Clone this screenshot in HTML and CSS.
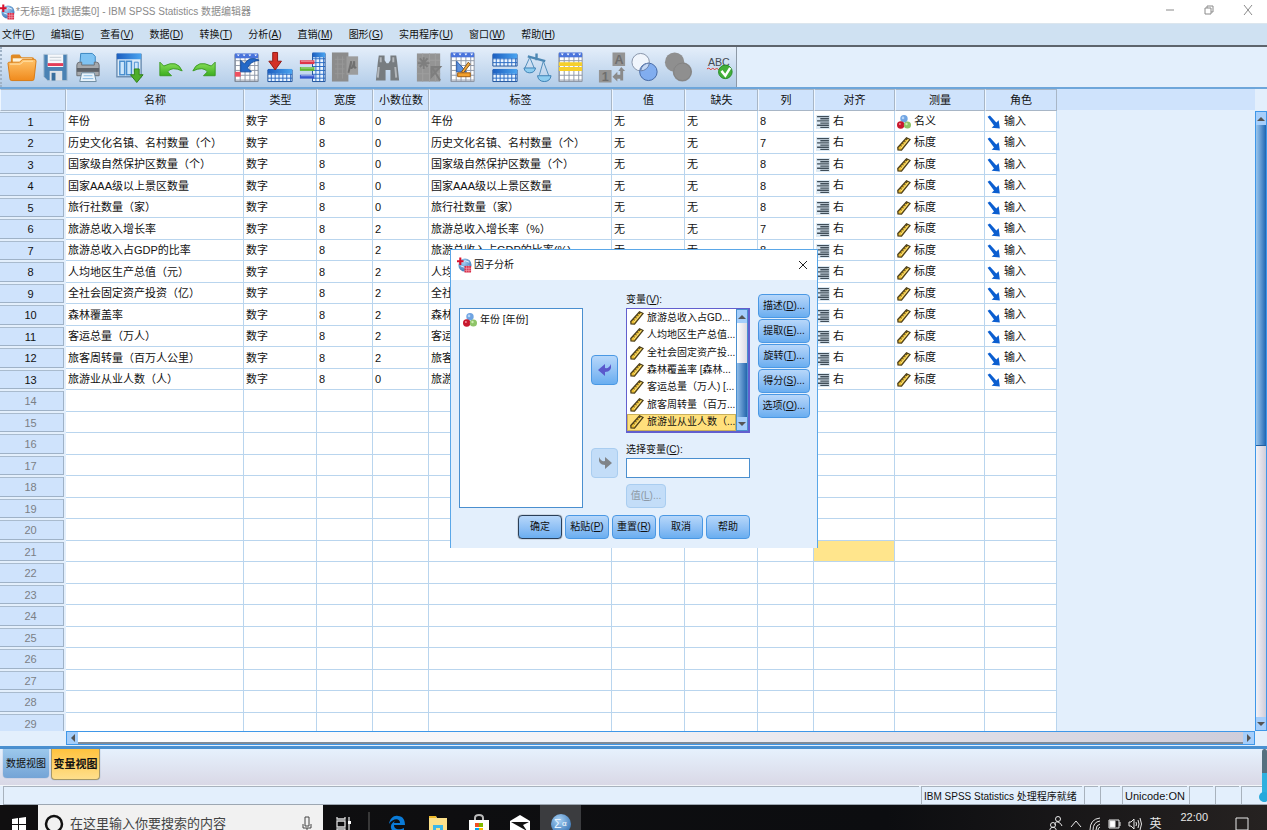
FILE: index.html
```
<!DOCTYPE html>
<html lang="zh-CN">
<head>
<meta charset="utf-8">
<title>*无标题1 [数据集0] - IBM SPSS Statistics 数据编辑器</title>
<link rel="stylesheet" href="styles.css">
</head>
<body>

<svg class="defs" width="0" height="0">
<defs>
	<linearGradient id="blueFade" x1="0" y1="0" x2="1" y2="0"><stop offset="0" stop-color="#1d5fc0"/><stop offset="1" stop-color="#4aa4f0"/></linearGradient>
	<linearGradient id="orangeFade" x1="0" y1="0" x2="0" y2="1"><stop offset="0" stop-color="#ffc36a"/><stop offset="1" stop-color="#f08a1c"/></linearGradient>
	<linearGradient id="greenFade" x1="0" y1="0" x2="0" y2="1"><stop offset="0" stop-color="#8be05a"/><stop offset="1" stop-color="#3cae20"/></linearGradient>
	<radialGradient id="globe" cx=".4" cy=".3" r=".8"><stop offset="0" stop-color="#a9d2f5"/><stop offset="1" stop-color="#2e6db0"/></radialGradient>
	<pattern id="cells" width="5" height="5" patternUnits="userSpaceOnUse"><rect width="5" height="5" fill="#8f98a8"/><rect width="4" height="4" fill="#fff"/></pattern>
	<pattern id="blueCells" width="4" height="4" patternUnits="userSpaceOnUse"><rect width="4" height="4" fill="#2b6cc4"/><rect width="3" height="3" fill="#e9f4ff"/></pattern>
</defs>
<symbol id="app" viewBox="0 0 16 16"><circle cx="8.500" cy="8" r="7" fill="url(#globe)"/><path d="M5 5q4-3 8 0M4 9q4 3 9 0" stroke="#e5f2ff" fill="none"/><path d="M0 4h7M3.500 0v8" stroke="#d9112c" stroke-width="2.200"/><path d="M8 9h7v7H8z" fill="#d92c48"/><path d="M8 11.500h7M8 13.700h7M10.300 9v7M12.700 9v7" stroke="#f6b6c0" stroke-width=".6"/></symbol>
<symbol id="ruler" viewBox="0 0 14 14"><path d="M.8 10.500 9.500.8 13 2.500 4.500 13.200 1 13z" fill="#e9bd32" stroke="#4c3f1c" stroke-width="1.300"/><path d="m3.200 8 1.500 1.200M5.200 6l1.500 1.200M7.200 4l1.500 1.200M9 2l1.200 1" stroke="#4c3f1c"/><path d="m4 11 7.500-8.500" stroke="#fbe68d"/></symbol>
<symbol id="balls" viewBox="0 0 14 14"><circle cx="7" cy="3.800" r="3.700" fill="#6fa4e2"/><circle cx="3.700" cy="10" r="3.700" fill="#c8182e"/><circle cx="10.400" cy="10" r="3.600" fill="#8ec468"/><circle cx="6" cy="2.900" r="1.300" fill="#b5d4f8"/><circle cx="2.900" cy="9" r="1" fill="#f08a96"/><circle cx="9.500" cy="9" r="1.200" fill="#cdeeb0"/></symbol>
<symbol id="right" viewBox="0 0 13 13"><path d="M0 0h13v13H0z" fill="#dce9f3"/><path d="M1 1.500h11M4 3.500h8M1 5.500h11M4 7.500h8M1 9.500h11M4 11.500h8" stroke="#3f4d58" stroke-width="1.200"/></symbol>
<symbol id="input" viewBox="0 0 12 12"><path d="M.5 1.500 2.500.5l5.500 6L10 4.500l1 7-7-.5 2-2z" fill="#0b5ed0"/></symbol>
</svg>

<div class="window">
	<header class="titlebar">
		<svg class="app-icon"><use href="#app"/></svg>
		<span class="title">*无标题1 [数据集0] - IBM SPSS Statistics 数据编辑器</span>
		<div class="window-buttons">
			<button aria-label="最小化"><svg viewBox="0 0 10 10"><path d="M1 5h8"/></svg></button>
			<button aria-label="还原"><svg viewBox="0 0 10 10"><path d="M1 3h6v6H1zM3 3V1h6v6H7"/></svg></button>
			<button aria-label="关闭"><svg viewBox="0 0 10 10"><path d="m1 0 8 10M9 0 1 10"/></svg></button>
		</div>
	</header>

	<nav class="menubar">
		<a href="#">文件(<u>F</u>)</a>
		<a href="#">编辑(<u>E</u>)</a>
		<a href="#">查看(<u>V</u>)</a>
		<a href="#">数据(<u>D</u>)</a>
		<a href="#">转换(<u>T</u>)</a>
		<a href="#">分析(<u>A</u>)</a>
		<a href="#">直销(<u>M</u>)</a>
		<a href="#">图形(<u>G</u>)</a>
		<a href="#">实用程序(<u>U</u>)</a>
		<a href="#">窗口(<u>W</u>)</a>
		<a href="#">帮助(<u>H</u>)</a>
	</nav>

	<div class="toolbar-row">
	<div class="toolbar">
		<div class="group">
			<button aria-label="打开"><svg viewBox="0 0 32 32"><path d="M5 12V5q0-2 2-2h7l2 3h11q2 0 2 2v5z" fill="#e08a24"/><path d="M7 7h20v8H7z" fill="#fff3d8"/><path d="M2 12q0-1 2-1h10l3-3h12q2 0 2 2l-2 18q0 2-2 2H6q-2 0-2-2z" fill="url(#orangeFade)" stroke="#d87c16"/><path d="M4 13h11l3-3h10" stroke="#ffe3b0" fill="none"/></svg></button>
			<button aria-label="保存"><svg viewBox="0 0 32 32"><path d="M6 3h23v27H9l-4-4V3z" fill="#4a82b4" stroke="#a8bfd4"/><path d="M9 3h16v13H9z" fill="#f6f8fb"/><path d="M9 12h16v3H9z" fill="#e23c58"/><path d="M11 6h12M11 9h12" stroke="#c2cad4"/><path d="M11 20h13v10H11z" fill="#dfe3e9"/><path d="M13 22h4v8h-4z" fill="#3a6f9e"/></svg></button>
			<button aria-label="打印"><svg viewBox="0 0 32 32"><path d="M9 2h12l3 3v10H8z" fill="#7fc3f3" stroke="#3a85c0"/><path d="M5 14q0-3 3-3h2v3h13v-3h2q3 0 3 3v11H5z" fill="#a5a8ac" stroke="#6c6f74"/><path d="M5 17h23v4H5z" fill="#5e6268"/><path d="M10 22h13l2 9H8z" fill="#e8f3fb" stroke="#6c8aa0"/><path d="M12 25h9M11 28h11" stroke="#83b8df"/></svg></button>
		</div>
		<div class="group">
			<button aria-label="重新调用对话框"><svg viewBox="0 0 32 32"><path d="M3 3h25v23H3z" fill="#dcebf8" stroke="#6e90b4" stroke-width="1.500"/><path d="M3 2h25v6H3z" fill="url(#blueFade)"/><path d="M6 10h5v14H6zM13 10h5v14h-5z" fill="#cce6fb" stroke="#4a8fcf" stroke-width="1.500"/><path d="M21 11h4v10h-4z" fill="#cce6fb" stroke="#4a8fcf"/><path d="M21 18h5v6h4l-6.500 8L17 24h4z" fill="#4fae2a" stroke="#2d7f16"/></svg></button>
		</div>
		<div class="group">
			<button aria-label="撤消"><svg viewBox="0 0 32 32"><path d="M4 11v14h12l-4-4q4-6 15-1-5-12-19-5z" fill="url(#greenFade)" stroke="#3c9a24"/></svg></button>
			<button aria-label="重做"><svg viewBox="0 0 32 32"><path d="M27 11v14H15l4-4q-4-6-15-1 5-12 19-5z" fill="url(#greenFade)" stroke="#3c9a24"/></svg></button>
		</div>
		<div class="group">
			<button aria-label="转到个案"><svg viewBox="0 0 32 32"><path d="M4 3h24v28H4z" fill="url(#cells)" stroke="#7d8796"/><path d="M4 2h24v5H4z" fill="#4a74dc"/><path d="m6 3 3 0-1.500 2zM12 3h3l-1.500 2zM18 3h3l-1.500 2zM24 3h3l-1.500 2z" fill="#fff"/><path d="M4 21h6v5H4z" fill="#ee5060"/><path d="M10 9v12h11l-4-4q3-7 12-8-10-5-15 4z" fill="#2469c8" stroke="#1a4f9f"/></svg></button>
			<button aria-label="转到变量"><svg viewBox="0 0 32 32"><path d="M4 19h25v12H4z" fill="url(#blueCells)" stroke="#22569e"/><path d="M4 18h25v5H4z" fill="url(#blueFade)"/><path d="M9 1h5v9h4l-6.500 9L5 10h4z" fill="#d43127" stroke="#941812"/></svg></button>
			<button aria-label="变量"><svg viewBox="0 0 32 32"><path d="M16 2h13v29H16z" fill="url(#blueCells)" stroke="#22569e"/><path d="M16 1h13v5H16z" fill="url(#blueFade)"/><path d="M3 11h15" stroke="#df3549" stroke-width="4"/><path d="M3 18h15" stroke="#5fb832" stroke-width="4"/><path d="M3 26h15" stroke="#3658cf" stroke-width="4"/><path d="M4 10h13M4 17h13M4 25h13" stroke="#ffffff88"/></svg></button>
			<button aria-label="描述统计" disabled><svg viewBox="0 0 32 32"><path d="M2 1h17v30H2z" fill="#8c8c8c"/><path d="M17 5h12v19H17z" fill="#9c9c9c"/><path d="M5 8h10M5 13h10M5 18h10M5 23h10M8 5v23M13 5v23" stroke="#989898"/><path d="m19 22 3-12-1 6q2 4 4-6v5q0 3 2 1" fill="none" stroke="#707070" stroke-width="2"/></svg></button>
		</div>
		<div class="group">
			<button aria-label="查找"><svg viewBox="0 0 32 32"><path d="M7 4h6v5l2 3h2l2-3V4h6l1 7 2 19h-9V19h-5v11H4l2-19z" fill="#777c80"/><path d="M9 6v5M22 6v5M7 16l-1 11M24 16l1 11" stroke="#b3b7bb" stroke-width="2"/></svg></button>
		</div>
		<div class="group">
			<button aria-label="插入个案" disabled><svg viewBox="0 0 32 32"><path d="M3 2h24v29H3z" fill="#949494"/><path d="M3 9h24M3 16h24M3 23h24M9 2v29M16 2v29M22 2v29" stroke="#9f9f9f"/><path d="m6 7 8 9M14 7l-8 9M4 12h12M10 6v12M18 26V16h9zM19 17l8 13" stroke="#7e7e7e" fill="#888" stroke-width="2"/></svg></button>
			<button aria-label="插入变量"><svg viewBox="0 0 32 32"><path d="M4 2h24v29H4z" fill="url(#cells)" stroke="#8b94a2"/><path d="M4 1h24v5H4z" fill="#4a74dc"/><path d="m6 2 3 0-1.500 2zM12 2h3l-1.500 2zM18 2h3l-1.500 2zM24 2h3l-1.500 2z" fill="#fff"/><path d="M10 10v11h10z" fill="#5d91dd" stroke="#2659a8"/><path d="m15 21 7-10 2 2-7 9z" fill="#f0a83c" stroke="#86541a"/><path d="M11 22h13v4H11z" fill="#f3a12e" stroke="#a05c12"/></svg></button>
		</div>
		<div class="group">
			<button aria-label="拆分文件"><svg viewBox="0 0 32 32"><path d="M4 3h25v12H4zM4 19h25v12H4z" fill="url(#blueCells)" stroke="#22569e"/><path d="M4 2h25v5H4zM4 18h25v5H4z" fill="url(#blueFade)"/></svg></button>
			<button aria-label="加权个案"><svg viewBox="0 0 32 32"><path d="M6 5 24 10M15 2v7" stroke="#4d88b4" stroke-width="2.500"/><path d="M8 6 3 17M8 6l5 12M22 10l-4 14M22 10l6 16" stroke="#4f8cba" fill="none"/><path d="M2 17h12q-1 5-6 5t-6-5zM16 25h14q-1 6-7 6t-7-6z" fill="#8ecdf0" stroke="#3c80b4"/></svg></button>
			<button aria-label="选择个案"><svg viewBox="0 0 32 32"><path d="M4 2h24v29H4z" fill="url(#cells)" stroke="#8b94a2"/><path d="M4 1h24v5H4z" fill="#4a74dc"/><path d="m6 2 3 0-1.500 2zM12 2h3l-1.500 2zM18 2h3l-1.500 2zM24 2h3l-1.500 2z" fill="#fff"/><path d="M4 11h24v4H4zM4 16h24v4H4z" fill="#f6cf2a"/></svg></button>
		</div>
		<div class="group">
			<button aria-label="值标签" disabled><svg viewBox="0 0 32 32"><path d="M16 1h13v14H16zM2 19h13v13H2z" fill="#949494"/><text x="18" y="13" font-size="13" font-weight="bold" fill="#6e6e6e">A</text><text x="5" y="30" font-size="13" font-weight="bold" fill="#6e6e6e">1</text><path d="m16 26 5-5v3h3v-4h-2l3-4 4 4h-2v10h-3v-2h-3v3z" fill="#8a8a8a"/></svg></button>
			<button aria-label="使用变量集"><svg viewBox="0 0 32 32"><circle cx="11" cy="11" r="9" fill="#f0f5fc" stroke="#8794a8"/><circle cx="19" cy="21" r="9" fill="#75a6ef" fill-opacity=".85" stroke="#4367a4"/><path d="M11 20a9 9 0 0 0 9-8 9 9 0 0 0-9 8z" fill="#c3d7f4" stroke="#6780ab"/></svg></button>
			<button aria-label="显示所有变量" disabled><svg viewBox="0 0 32 32"><circle cx="12" cy="11" r="10" fill="#8f8f8f"/><circle cx="20" cy="21" r="10" fill="#8f8f8f"/><circle cx="20" cy="21" r="9" fill="none" stroke="#828282"/></svg></button>
		</div>
		<div class="group">
			<button aria-label="拼写检查"><svg viewBox="0 0 32 32"><text x="3" y="15" font-size="11" fill="#454b52">ABC</text><path d="m2 18 2-1 2 2 2-2 2 2 2-2 2 2 2-2" fill="none" stroke="#e03a2c"/><circle cx="21" cy="21" r="7" fill="#43b03a" stroke="#268a24"/><path d="m17 20 4 5 5-8" fill="none" stroke="#fff" stroke-width="2.500"/></svg></button>
		</div>
	</div>
	</div>

	<main class="sheet">
		<div class="viewport">
			<table class="variables">
				<colgroup><col class="c-num"><col class="c-name"><col class="c-type"><col class="c-width"><col class="c-dec"><col class="c-label"><col class="c-value"><col class="c-missing"><col class="c-cols"><col class="c-align"><col class="c-measure"><col class="c-role"></colgroup>
				<thead><tr><th></th><th>名称</th><th>类型</th><th>宽度</th><th>小数位数</th><th>标签</th><th>值</th><th>缺失</th><th>列</th><th>对齐</th><th>测量</th><th>角色</th></tr></thead>
				<tbody id="rows"></tbody>
			</table>
		</div>
		<div class="vscroll"><button class="up" aria-label="向上"></button><div class="thumb"></div><div class="track"></div><button class="down" aria-label="向下"></button></div>
		<div class="hscroll"><button class="left" aria-label="向左"></button><div class="thumb"></div><button class="right" aria-label="向右"></button></div>
	</main>

	<div class="view-tabs">
		<button>数据视图</button>
		<button class="active">变量视图</button>
		<div class="gauge"></div>
	</div>

	<footer class="statusbar">
		<span class="s-fill"></span>
		<span class="s-message">IBM SPSS Statistics 处理程序就绪</span>
		<span class="s-small"></span>
		<span class="s-small"></span>
		<span class="s-unicode">Unicode:ON</span>
		<span class="s-cell"></span>
		<span class="s-cell"></span>
		<span class="s-cell"></span>
	</footer>
</div>

<div class="taskbar">
	<button class="start" aria-label="开始"><svg width="14" height="15" viewBox="0 0 14 15"><path d="m0 2 6-1v6H0zM7 1l7-1v7H7zM0 8h6v6l-6-1zM7 8h7v7l-7-1z" fill="#fff"/></svg></button>
	<label class="search">
		<svg width="20" height="20" viewBox="0 0 20 20"><circle cx="10" cy="10" r="8" fill="none" stroke="#111" stroke-width="2.500"/></svg>
		<input type="text" placeholder="在这里输入你要搜索的内容">
		<svg width="10" height="16" viewBox="0 0 10 16"><path d="M3 1h4v9H3zM1 8v4h8V8M5 12v4" fill="none" stroke="#444"/></svg>
	</label>
	<div class="task-apps">
		<button aria-label="任务视图"><svg width="16" height="16" viewBox="0 0 16 16"><path d="M1 1v2h8V1M1 5h8v6H1zM1 15v-2h8v2M13 1v14" fill="none" stroke="#ddd" stroke-width="1.300"/><path d="M12 5h3v3h-3z" fill="#fff"/></svg></button>
		<i></i>
		<button aria-label="Edge"><svg width="18" height="18" viewBox="0 0 18 18"><path d="M1 9C2 3 6 0 10 1c5 0 7 4 7 9H6c0 5 6 5 10 3v3C10 20 2 17 3 11c0-2 2-4 4-5-1 1-1 2-1 2h6c0-5-7-5-11 1z" fill="#0a7bd8"/></svg></button>
		<button aria-label="文件资源管理器"><svg width="20" height="18" viewBox="0 0 20 18"><path d="M1 1h7l1 2h10v14H1z" fill="#fbe08a"/><path d="M1 1h7v2H1z" fill="#eeb92b"/><path d="M5 10h10v8H5z" fill="#3cb7e8"/><path d="M8 13h4v5H8z" fill="#fbe08a"/></svg></button>
		<button aria-label="应用商店"><svg width="20" height="20" viewBox="0 0 20 20"><path d="M6 7V4q0-3 4-3t4 3v3" fill="none" stroke="#bbb" stroke-width="2"/><path d="M0 6h20v14H0z" fill="#fff"/><path d="M6 9h4v4H6z" fill="#f25022"/><path d="M10 9h4v4h-4z" fill="#7fba00"/><path d="M6 14h4v4H6z" fill="#00a4ef"/><path d="M10 14h4v4h-4z" fill="#ffb900"/></svg></button>
		<button aria-label="邮件"><svg width="20" height="18" viewBox="0 0 20 18"><path d="m0 6 10-6 10 6v12H0z" fill="#fff"/><path d="M1 7h18l-6 3 4 6z" fill="#111"/></svg></button>
		<button class="running" aria-label="SPSS"><svg width="20" height="22" viewBox="0 0 20 22"><circle cx="10" cy="11" r="10" fill="url(#globe)"/><text x="3" y="15" font-size="12" fill="#e8f4ff">Σ</text><text x="11" y="13" font-size="8" fill="#fff">α</text></svg></button>
	</div>
	<div class="tray">
		<svg width="14" height="16" viewBox="0 0 14 16"><circle cx="9" cy="3" r="2.500"/><circle cx="4" cy="9" r="2.500"/><path d="M6 9q0-4 3-3t4 4M0 16q1-5 4-5t4 5"/></svg>
		<svg width="12" height="12" viewBox="0 0 12 12"><path d="m1 9 5-6 5 6"/></svg>
		<svg width="12" height="14" viewBox="0 0 12 14"><path d="M1 13Q1 2 11 1M4 13q0-8 7-9M7 13q0-5 4-6M9 13q0-2 2-3"/></svg>
		<svg width="13" height="10" viewBox="0 0 13 10"><path d="M1 1h10v8H1zM12 3v4"/><path d="M2 2h5v6H2z" fill="#fff"/></svg>
		<svg width="14" height="14" viewBox="0 0 14 14"><path d="M1 5h2l3-3v10L3 9H1zM8 5q1 2 0 4M10 3q2 4 0 8M12 1q3 6 0 12"/></svg>
		<span class="ime">英</span>
		<time>22:00</time>
		<svg class="notify" width="14" height="14" viewBox="0 0 14 14"><path d="M1 1h12v12H1z"/></svg>
	</div>
</div>

<section class="dialog" role="dialog" aria-labelledby="dialogTitle">
	<div class="dialog-title">
		<svg class="app-icon"><use href="#app"/></svg>
		<span id="dialogTitle">因子分析</span>
		<button aria-label="关闭"><svg width="10" height="10" viewBox="0 0 10 10"><path d="m1 1 8 8M9 1 1 9" stroke="#222" fill="none"/></svg></button>
	</div>
	<div class="dialog-body">
		<ul class="list source" role="listbox" aria-label="源变量">
			<li role="option"><svg><use href="#balls"/></svg>年份 [年份]</li>
		</ul>
		<div class="movers">
			<button aria-label="移出变量"><svg width="14" height="14" viewBox="0 0 14 14"><path d="M0 7l7-6v4q4 1 6-4 1 8-6 8v4z" fill="#5a58cc"/></svg></button>
			<button aria-label="移入选择变量" disabled><svg width="14" height="14" viewBox="0 0 14 14"><path d="M14 7 7 1v4Q3 6 1 1q-1 8 6 8v4z" fill="#808488"/></svg></button>
		</div>
		<div class="target">
			<span class="caption" id="varsLabel">变量(<u>V</u>):</span>
			<div class="list picked">
				<ul role="listbox" aria-labelledby="varsLabel">
					<li role="option"><svg><use href="#ruler"/></svg>旅游总收入占GD...</li>
					<li role="option"><svg><use href="#ruler"/></svg>人均地区生产总值...</li>
					<li role="option"><svg><use href="#ruler"/></svg>全社会固定资产投...</li>
					<li role="option"><svg><use href="#ruler"/></svg>森林覆盖率 [森林...</li>
					<li role="option"><svg><use href="#ruler"/></svg>客运总量（万人) [...</li>
					<li role="option"><svg><use href="#ruler"/></svg>旅客周转量（百万...</li>
					<li role="option" aria-selected="true"><svg><use href="#ruler"/></svg>旅游业从业人数（...</li>
				</ul>
				<div class="list-scroll"><button class="up" aria-label="向上"></button><div class="track"></div><div class="thumb"></div><button class="down" aria-label="向下"></button></div>
			</div>
			<label class="caption" for="selectVar">选择变量(<u>C</u>):</label>
			<input type="text" id="selectVar">
			<button class="btn value" disabled>值(<u>L</u>)...</button>
		</div>
		<div class="options">
			<button class="btn">描述(<u>D</u>)...</button>
			<button class="btn">提取(<u>E</u>)...</button>
			<button class="btn">旋转(<u>T</u>)...</button>
			<button class="btn">得分(<u>S</u>)...</button>
			<button class="btn">选项(<u>O</u>)...</button>
		</div>
	</div>
	<div class="actions">
		<button class="btn default">确定</button>
		<button class="btn">粘贴(<u>P</u>)</button>
		<button class="btn">重置(<u>R</u>)</button>
		<button class="btn">取消</button>
		<button class="btn">帮助</button>
	</div>
</section>

<script>
// name, decimals, label, columns
var vars = [
	["年份", 0, "年份", 8],
	["历史文化名镇、名村数量（个）", 0, "历史文化名镇、名村数量（个）", 7],
	["国家级自然保护区数量（个）", 0, "国家级自然保护区数量（个）", 8],
	["国家AAA级以上景区数量", 0, "国家AAA级以上景区数量", 8],
	["旅行社数量（家）", 0, "旅行社数量（家）", 8],
	["旅游总收入增长率", 2, "旅游总收入增长率（%）", 7],
	["旅游总收入占GDP的比率", 2, "旅游总收入占GDP的比率(%)", 8],
	["人均地区生产总值（元）", 2, "人均地区生产总值（元）", 8],
	["全社会固定资产投资（亿）", 2, "全社会固定资产投资（亿）", 8],
	["森林覆盖率", 2, "森林覆盖率", 8],
	["客运总量（万人）", 2, "客运总量（万人）", 8],
	["旅客周转量（百万人公里）", 2, "旅客周转量（百万人公里）", 8],
	["旅游业从业人数（人）", 0, "旅游业从业人数（人）", 8]
];
var rowCount = 29;
var html = "";
function icon(id)
{
	return "<svg><use href=\"#" + id + "\"/></svg>";
}
for(var i = 0; i < rowCount; i++)
{
	var v = vars[i];
	if(v)
	{
		var cells = [v[0], "数字", 8, v[1], v[2], "无", "无", v[3],
			icon("right") + "右",
			i === 0 ? icon("balls") + "名义" : icon("ruler") + "标度",
			icon("input") + "输入"];
		html += "<tr><th>" + (i + 1) + "</th><td>" + cells.join("</td><td>") + "</td></tr>";
	}
	else
	{
		html += "<tr class=\"empty\"><th>" + (i + 1) + "</th>";
		for(var c = 0; c < 11; c++)
			html += i === 20 && c === 8 ? "<td class=\"current\"></td>" : "<td></td>";
		html += "</tr>";
	}
}
document.getElementById("rows").innerHTML = html;
</script>
</body>
</html>
```
FILE: styles.css
```
* {
	box-sizing:border-box;
}
body {
	margin:0;
	height:100vh;
	overflow:hidden;
	display:flex;
	flex-direction:column;
	font:11px/16px "Liberation Sans", "Noto Sans CJK SC", sans-serif;
	color:#111;
	background:#e3effc;
}
button, input {
	font:inherit;
	color:inherit;
	margin:0;
	padding:0;
	border:none;
	background:none;
}
.defs {
	position:absolute;
}
.window {
	flex:1;
	min-height:0;
	display:flex;
	flex-direction:column;
}
.app-icon {
	width:15px;
	height:16px;
	flex:none;
}

/* title and menu */
.titlebar {
	height:23px;
	flex:none;
	display:flex;
	align-items:center;
	background:#fff;
	color:#8a8a8a;
	font-size:10px;
}
.title {
	margin-left:1px;
}
.window-buttons {
	margin-left:auto;
	display:flex;
}
.window-buttons button {
	width:39px;
	height:23px;
}
.window-buttons svg {
	width:10px;
	height:10px;
	fill:none;
	stroke:#8a8a8a;
}
.menubar {
	height:24px;
	flex:none;
	display:flex;
	align-items:center;
	gap:16px;
	padding-left:2px;
	background:#cfe1f2;
	border-top:1px solid #dce6ee;
	border-bottom:2px solid #5d646c;
	font-size:10px;
}
.menubar a {
	color:#111;
	text-decoration:none;
	white-space:nowrap;
}

/* toolbar */
.toolbar-row {
	flex:none;
	display:flex;
	border-bottom:2px solid #6ea6da;
}
.toolbar {
	height:40px;
	display:flex;
	align-items:center;
	gap:11px;
	padding-left:4px;
	border-left:2px dotted #9fb2c6;
	border-right:1px solid #8d99a6;
	background:linear-gradient(#e4eefa, #b2cce8);
}
.group {
	display:flex;
	gap:2px;
}
.group button {
	width:31px;
	height:32px;
}
.group svg {
	display:block;
	width:31px;
	height:32px;
}

/* variable sheet */
.sheet {
	flex:1;
	min-height:0;
	display:grid;
	grid-template-columns:1fr 12px;
	grid-template-rows:1fr 15px;
}
.viewport {
	overflow:hidden;
	background:linear-gradient(#cfe3fc 21px, #e3effc 21px);
}
.variables {
	table-layout:fixed;
	width:1057px;
	border-collapse:separate;
	border-spacing:0;
}
.c-num { width:66px; }
.c-name { width:178px; }
.c-type { width:73px; }
.c-width { width:56px; }
.c-dec { width:56px; }
.c-label { width:183px; }
.c-value { width:73px; }
.c-missing { width:73px; }
.c-cols { width:56px; }
.c-align { width:81px; }
.c-measure { width:90px; }
.c-role { width:72px; }
.variables th {
	padding:0;
	font-weight:normal;
	text-align:center;
	white-space:nowrap;
	background:#cfe3fc;
}
.variables thead th {
	height:22px;
	border:1px solid #a8b6c6;
	border-left-color:#eef6ff;
}
.variables tbody th {
	height:21px;
	padding-right:3px;
	border:0 solid #e3effc;
	border-width:1px 2px 1px 0;
	box-shadow:inset -1px -1px #9fb2c7, inset 0 1px #a9bbce;
}
.variables td {
	padding:0 0 0 2px;
	line-height:16px;
	white-space:nowrap;
	overflow:hidden;
	background:#fff;
	border-right:1px solid #b9d5ee;
	border-bottom:1px solid #b9d5ee;
}
.variables tbody tr {
	height:21px;
}
.variables tbody tr:nth-child(even) {
	height:22px;
}
.variables td svg {
	width:14px;
	height:14px;
	margin-right:3px;
	vertical-align:middle;
}
.variables .empty th {
	color:#7b7f85;
}
.variables td.current {
	background:#ffe58c;
}

/* scrollbars */
.vscroll {
	margin-top:22px;
	display:flex;
	flex-direction:column;
	border:1px solid #3f97e8;
}
.vscroll .thumb {
	flex:321;
	background:linear-gradient(90deg, #9cc6ec, #1e66b4);
	border-bottom:1px solid #2260a0;
}
.vscroll .track {
	flex:272;
	background:linear-gradient(90deg, #f4f2f6, #cfcdda);
}
.up, .down, .left, .right {
	flex:none;
	display:flex;
	align-items:center;
	justify-content:center;
	background:#a5cefb;
}
.up, .down {
	height:13px;
}
.left, .right {
	width:11px;
}
.up::before, .down::before, .left::before, .right::before {
	content:"";
	border:4px solid transparent;
}
.up::before {
	border-top:none;
	border-bottom-color:#555;
}
.down::before {
	border-bottom:none;
	border-top-color:#555;
}
.left::before {
	border-left:none;
	border-right-color:#555;
}
.right::before {
	border-right:none;
	border-left-color:#555;
}
.hscroll {
	margin-left:66px;
	height:14px;
	display:flex;
	border:1px solid #3f97e8;
}
.hscroll .thumb {
	flex:1;
	background:linear-gradient(90deg, #fff, #f1f0f4 50%, #cfcdda);
	border-bottom:2px solid #7f8b98;
}

/* view tabs and status */
.view-tabs {
	position:relative;
	flex:none;
	height:40px;
	padding-left:3px;
	display:flex;
	align-items:flex-start;
	gap:2px;
	background:linear-gradient(#e6f1fd, #d9d8e6);
	border-top:3px solid #4a90d0;
	border-bottom:1px solid #f3f6fa;
}
.view-tabs button {
	width:46px;
	height:29px;
	font-size:10px;
	border-radius:0 0 4px 4px;
	background:linear-gradient(#9cc8ec, #74a4d6);
	box-shadow:0 0 1px #4f7fac;
}
.view-tabs .active {
	width:49px;
	height:31px;
	font-size:11px;
	font-weight:bold;
	background:linear-gradient(#ffc23e, #ffdf8c);
	border:1px solid #a59768;
	border-top:none;
}
.gauge {
	position:absolute;
	right:0;
	top:0;
	width:5px;
	height:53px;
	background:linear-gradient(#56707f 45%, #2fb0df 45%);
	border-radius:3px;
}
.gauge::after {
	content:"";
	position:absolute;
	left:-3px;
	bottom:0;
	width:10px;
	height:10px;
	border-radius:50%;
	background:#27a9dc;
}
.statusbar {
	flex:none;
	height:19px;
	margin-left:3px;
	display:flex;
	font-size:10px;
	line-height:19px;
	border-bottom:1px solid #9da7b2;
}
.statusbar span {
	flex:none;
	padding-left:2px;
	margin-right:2px;
	border-left:1px solid #a8b2bd;
	border-top:1px solid #a8b2bd;
}
.statusbar .s-fill {
	flex:1;
}
.s-message {
	width:161px;
}
.s-small {
	width:14px;
}
.s-small + .s-small {
	width:20px;
}
.s-unicode {
	width:65px;
	font-size:11px;
}
.s-cell {
	width:24px;
}

/* taskbar */
.taskbar {
	flex:none;
	height:25px;
	display:flex;
	overflow:hidden;
	background:linear-gradient(90deg, #100f10, #0c0d10 70%, #262221);
}
.taskbar > * {
	height:38px;
}
.start {
	width:38px;
}
.start svg {
	vertical-align:middle;
}
.search {
	width:285px;
	flex:none;
	display:flex;
	align-items:center;
	gap:6px;
	padding:0 11px 0 6px;
	background:#f1f1f1;
	font-size:13px;
}
.search input {
	flex:1;
	min-width:0;
}
.search input::placeholder {
	color:#444;
	opacity:1;
}
.task-apps {
	display:flex;
	align-items:center;
}
.task-apps button {
	width:41px;
	height:38px;
}
.task-apps svg {
	display:block;
	margin:auto;
}
.task-apps i {
	width:2px;
	height:24px;
	margin:0 6px 0 4px;
	background:#383838;
}
.task-apps .running {
	background:#3b3c3f;
}
.tray {
	margin-left:auto;
	padding-right:18px;
	display:flex;
	align-items:center;
	gap:7px;
	color:#e8e8e8;
	font-size:12px;
}
.tray svg {
	fill:none;
	stroke:#e8e8e8;
}
.tray time {
	align-self:flex-start;
	line-height:24px;
	margin:0 20px 0 12px;
	font-size:11px;
}

/* factor analysis dialog */
.dialog {
	position:absolute;
	left:450px;
	top:249px;
	width:368px;
	font-size:10px;
	background:#e3effc;
	border:1px solid #5aa7e8;
	border-bottom:none;
}
.dialog-title {
	height:30px;
	display:flex;
	align-items:center;
	gap:2px;
	padding:0 9px 0 6px;
	background:#fff;
}
.dialog-title button {
	margin-left:auto;
	height:16px;
}
.dialog-title button svg {
	display:block;
}
.dialog-body {
	display:grid;
	grid-template-columns:124px 27px 124px 52px;
	column-gap:8px;
	padding:12px 8px 0;
}
.list, .list ul {
	margin:0;
	padding:0;
	list-style:none;
}
.list {
	background:#fff;
	border:1px solid #4a8fcf;
}
.list li {
	display:flex;
	align-items:center;
	gap:3px;
	padding-left:3px;
	white-space:pre;
}
.list li svg {
	flex:none;
	width:14px;
	height:14px;
}
.source {
	margin-top:16px;
	height:200px;
	padding-top:2px;
}
.source li {
	height:18px;
}
.movers {
	display:flex;
	flex-direction:column;
	gap:63px;
	padding-top:63px;
}
.movers button, .btn {
	border:1px solid #4a98e4;
	border-radius:4px;
	background:linear-gradient(#b7d7fa, #8bbef4 60%, #6aaef0);
}
.movers button {
	height:30px;
}
.movers svg {
	vertical-align:middle;
}
.btn {
	height:24px;
	white-space:nowrap;
}
.movers button:disabled, .btn:disabled {
	color:#8d99a6;
	border-color:#a9cdf0;
	background:#c3ddf8;
}
.target {
	display:flex;
	flex-direction:column;
}
.caption {
	height:16px;
}
.picked {
	height:125px;
	display:flex;
	border:2px solid #625fce;
	border-width:1px 2px 2px 1px;
}
.picked ul {
	flex:1;
	min-width:0;
	display:flex;
	flex-direction:column;
}
.picked li {
	flex:1;
}
.picked li[aria-selected=true] {
	background:#ffe07c;
	box-shadow:inset 0 0 0 1px #c9b05a;
}
.list-scroll {
	width:12px;
	flex:none;
	display:flex;
	flex-direction:column;
	border:1px solid #4a8fcf;
}
.list-scroll .track {
	flex:40;
	background:linear-gradient(90deg, #fff, #dcdae4);
}
.list-scroll .thumb {
	flex:54;
	background:linear-gradient(90deg, #8fbce8, #2465ac);
}
.picked + .caption {
	margin-top:9px;
}
.target input {
	height:20px;
	border:1px solid #4a8fcf;
	background:#fff;
}
.value {
	width:40px;
	margin-top:6px;
}
.options {
	display:flex;
	flex-direction:column;
	gap:1px;
	padding-top:2px;
}
.actions {
	display:flex;
	justify-content:center;
	gap:3px;
	padding:7px 0 9px;
}
.actions .btn {
	width:44px;
}
.actions .default {
	border-color:#2a3f58;
	box-shadow:0 0 1px #111;
}
```
